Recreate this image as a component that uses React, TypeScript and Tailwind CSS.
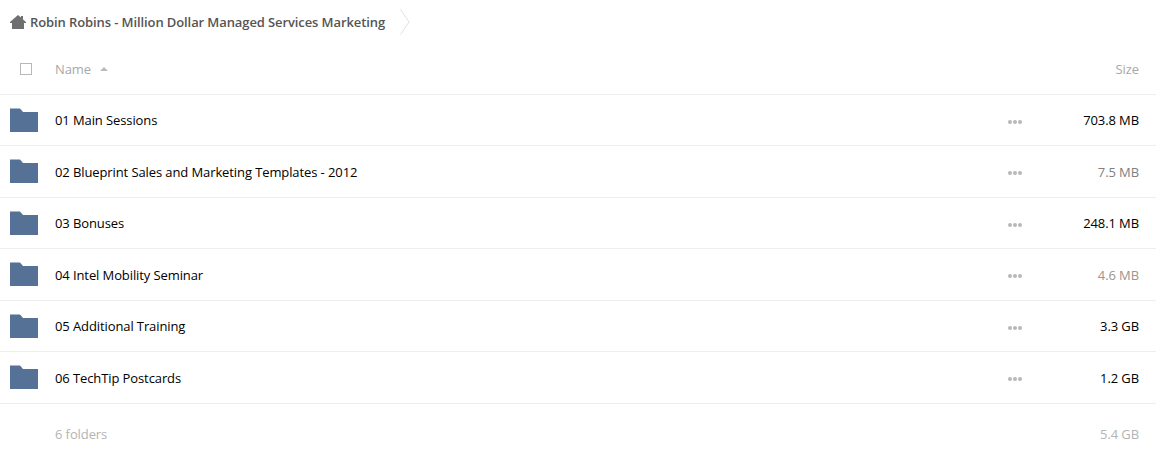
const FOLDERS = [
  { name: '01 Main Sessions', size: '703.8 MB', sizeClass: 'text-black' },
  { name: '02 Blueprint Sales and Marketing Templates - 2012', size: '7.5 MB', sizeClass: 'text-[#808080]' },
  { name: '03 Bonuses', size: '248.1 MB', sizeClass: 'text-black' },
  { name: '04 Intel Mobility Seminar', size: '4.6 MB', sizeClass: 'text-[#a0948c]' },
  { name: '05 Additional Training', size: '3.3 GB', sizeClass: 'text-black' },
  { name: '06 TechTip Postcards', size: '1.2 GB', sizeClass: 'text-black' },
]

function FolderIcon() {
  return (
    <svg width="28" height="24" viewBox="0 0 28 24" className="shrink-0">
      <path d="M0 0.5 H10 L13 4 H28 V24 H0 Z" fill="#557196" />
    </svg>
  )
}

function HomeIcon() {
  return (
    <svg width="16" height="14" viewBox="0 0 16 14" className="shrink-0">
      <path d="M8 0 L11 2.6 V1 H13 V4.4 L16 7 V8 H14 V14 H2 V8 H0 V7 Z" fill="#6f6f6f" />
    </svg>
  )
}

function MoreDots() {
  return (
    <div className="flex gap-[1px]">
      <span className="w-1 h-1 rounded-full bg-[#b8b8b8]" />
      <span className="w-1 h-1 rounded-full bg-[#b8b8b8]" />
      <span className="w-1 h-1 rounded-full bg-[#b8b8b8]" />
    </div>
  )
}

export default function App() {
  return (
    <div className="w-[1156px] h-[455px] overflow-hidden bg-white text-[13px] tracking-[-0.1px] font-['Open_Sans',sans-serif]">
      {/* Breadcrumb */}
      <div className="h-[44px] flex items-center pl-[10px]">
        <HomeIcon />
        <span className="ml-1 mt-[2px] font-semibold text-[#555555]">
          Robin Robins - Million Dollar Managed Services Marketing
        </span>
        <svg width="10" height="26" viewBox="0 0 10 26" className="ml-[15px]">
          <path d="M0.5 0.5 L9 13 L0.5 25.5" fill="none" stroke="#e0e0e0" />
        </svg>
      </div>

      {/* Header */}
      <div className="h-[50.5px] flex items-center border-b border-[#eeeeee]">
        <div className="w-[55px] shrink-0 pl-[20px]">
          <div className="w-3 h-3 border border-[#b8b8b8]" />
        </div>
        <span className="text-[#a8a8a8] mt-[1px]">Name</span>
        <span className="ml-[9px] w-0 h-0 border-x-[4px] border-x-transparent border-b-[4px] border-b-[#bbbbbb]" />
        <span className="ml-auto pr-[17px] text-[#a8a8a8] mt-[1px]">Size</span>
      </div>

      {/* Rows */}
      {FOLDERS.map((folder) => (
        <div key={folder.name} className="h-[51.5px] flex items-center border-b border-[#eeeeee]">
          <div className="w-[55px] shrink-0 pl-[10px]">
            <FolderIcon />
          </div>
          <span className="text-black mt-[2px]">{folder.name}</span>
          <div className="ml-auto mr-[34px] mt-[4px]">
            <MoreDots />
          </div>
          <span className={`w-[100px] text-right pr-[17px] mt-[2px] ${folder.sizeClass}`}>{folder.size}</span>
        </div>
      ))}

      {/* Summary */}
      <div className="h-[51px] flex items-center pt-[12px]">
        <span className="pl-[55px] text-[#b4b4b4]">6 folders</span>
        <span className="ml-auto pr-[17px] text-[#b4b4b4]">5.4 GB</span>
      </div>
    </div>
  )
}
